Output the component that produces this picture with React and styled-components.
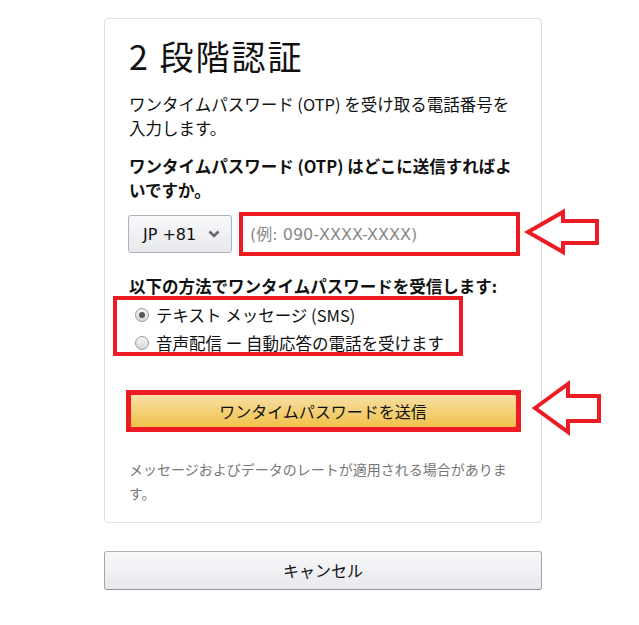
import React from 'react';
import styled, { createGlobalStyle } from 'styled-components';

const GlobalStyle = createGlobalStyle`
  body {
    margin: 0;
    background: #fff;
    font-family: "Noto Sans CJK JP", "Noto Sans", sans-serif;
    color: #111;
  }
`;

const RED = '#ed1c24';
const WIDE = '"DejaVu Sans", "Noto Sans CJK JP", sans-serif';

const Page = styled.div`
  width: 438px;
  margin: 18px 0 0 104px;
`;

const Card = styled.div`
  border: 1px solid #ddd;
  border-radius: 4px;
  padding: 18px 24px 17px 24px;
`;

const Title = styled.h1`
  margin: 0;
  font-size: 34px;
  line-height: 38px;
  font-weight: 400;
  letter-spacing: 2px;
`;

const Text = styled.p`
  margin: ${p => p.$top || 0}px 0 0;
  font-size: ${p => p.$size || 16.5}px;
  line-height: 24px;
  font-weight: ${p => (p.$bold ? 700 : 400)};
  color: ${p => (p.$muted ? '#777' : '#111')};
`;

const PhoneRow = styled.div`
  position: relative;
  display: flex;
  margin-top: 13px;
  height: 38px;
`;

const Select = styled.div`
  width: 104px;
  margin-left: -1px;
  display: flex;
  align-items: center;
  justify-content: space-between;
  padding: 0 11px 0 14px;
  box-sizing: border-box;
  border: 1px solid #adb1b8;
  border-radius: 3px;
  background: linear-gradient(#f7f8fa, #e7e9ec);
  font-family: ${WIDE};
  font-size: 16px;
  color: #111;
`;

const Input = styled.input`
  flex: 1;
  margin-left: 10px;
  height: 38px;
  box-sizing: border-box;
  border: 1px solid #a6a6a6;
  padding: 0 7px;
  font-family: ${WIDE};
  font-size: 16px;
  outline: 4px solid ${RED};
  outline-offset: -1px;
  &::placeholder {
    color: #888;
  }
`;

const ArrowBox = styled.svg`
  position: absolute;
  left: ${p => p.$left}px;
  top: ${p => p.$top}px;
  overflow: visible;
`;

const RadioGroup = styled.div`
  position: relative;
  margin-top: 3px;
  &::after {
    content: '';
    position: absolute;
    left: -16px;
    top: -5px;
    width: 350px;
    height: 60px;
    box-sizing: border-box;
    border: 4px solid ${RED};
    pointer-events: none;
  }
`;

const RadioRow = styled.label`
  display: flex;
  align-items: center;
  height: 28px;
  font-size: 16.5px;
`;

const RadioDot = styled.span`
  width: 14px;
  height: 14px;
  margin: 0 7px 0 6px;
  border-radius: 50%;
  box-sizing: border-box;
  border: 1px solid #9a9a9a;
  background: linear-gradient(#f6f6f6, #d6d6d6);
  display: flex;
  align-items: center;
  justify-content: center;
  &::after {
    content: '';
    width: 6px;
    height: 6px;
    border-radius: 50%;
    background: ${p => (p.$checked ? '#555' : 'transparent')};
  }
`;

const SendWrap = styled.div`
  position: relative;
  margin-top: 37px;
  &::after {
    content: '';
    position: absolute;
    left: -3px;
    right: -4px;
    top: -4px;
    bottom: -4px;
    border: 5px solid ${RED};
    pointer-events: none;
  }
`;

const SendButton = styled.button`
  display: block;
  width: 100%;
  height: 34px;
  border: 1px solid #a88734;
  border-radius: 3px;
  background: linear-gradient(#f7dfa5, #f0c14b);
  font-family: inherit;
  font-size: 16px;
  color: #111;
`;

const CancelButton = styled.button`
  display: block;
  width: 100%;
  height: 39px;
  margin-top: 28px;
  padding: 0 0 2px;
  border: 1px solid #adb1b8;
  border-color: #adb1b8 #a2a6ac #8d9096;
  border-radius: 3px;
  background: linear-gradient(#f7f8fa, #e7e9ec);
  font-family: inherit;
  font-size: 16px;
  color: #111;
`;

function Arrow({ left, top, tip, headX, headTop, headBottom, shaftTop, shaftBottom, end }) {
  const pts = [
    [tip[0], tip[1]],
    [headX, headTop],
    [headX, shaftTop],
    [end, shaftTop],
    [end, shaftBottom],
    [headX, shaftBottom],
    [headX, headBottom],
  ]
    .map(p => p.join(','))
    .join(' ');
  return (
    <ArrowBox $left={left} $top={top} width={end + 4} height={headBottom + 4}>
      <polygon points={pts} fill="#fff" stroke={RED} strokeWidth="4" />
    </ArrowBox>
  );
}

export default function App() {
  return (
    <>
      <GlobalStyle />
      <Page>
        <Card>
          <Title>2 段階認証</Title>
          <Text $top={17}>ワンタイムパスワード (OTP) を受け取る電話番号を入力します。</Text>
          <Text $top={14} $bold>ワンタイムパスワード (OTP) はどこに送信すればよいですか。</Text>

          <PhoneRow>
            <Select>
              <span>JP +81</span>
              <svg width="12" height="8" viewBox="0 0 12 8">
                <path d="M1.5 1.5 L6 6 L10.5 1.5" fill="none" stroke="#666" strokeWidth="2.6" />
              </svg>
            </Select>
            <Input placeholder="(例: 090-XXXX-XXXX)" />
            <Arrow
              left={397}
              top={-5}
              tip={[2, 22]}
              headX={37}
              headTop={2}
              headBottom={42}
              shaftTop={11}
              shaftBottom={33}
              end={71}
            />
          </PhoneRow>

          <Text $top={21} $bold>以下の方法でワンタイムパスワードを受信します:</Text>
          <RadioGroup>
            <RadioRow>
              <RadioDot $checked />
              テキスト メッセージ (SMS)
            </RadioRow>
            <RadioRow>
              <RadioDot />
              音声配信 ー 自動応答の電話を受けます
            </RadioRow>
          </RadioGroup>

          <SendWrap>
            <SendButton>ワンタイムパスワードを送信</SendButton>
            <Arrow
              left={404}
              top={-12}
              tip={[2, 26]}
              headX={35}
              headTop={2}
              headBottom={50}
              shaftTop={14}
              shaftBottom={39}
              end={66}
            />
          </SendWrap>

          <Text $top={29} $size={14} $muted>
            メッセージおよびデータのレートが適用される場合があります。
          </Text>
        </Card>
        <CancelButton>キャンセル</CancelButton>
      </Page>
    </>
  );
}
